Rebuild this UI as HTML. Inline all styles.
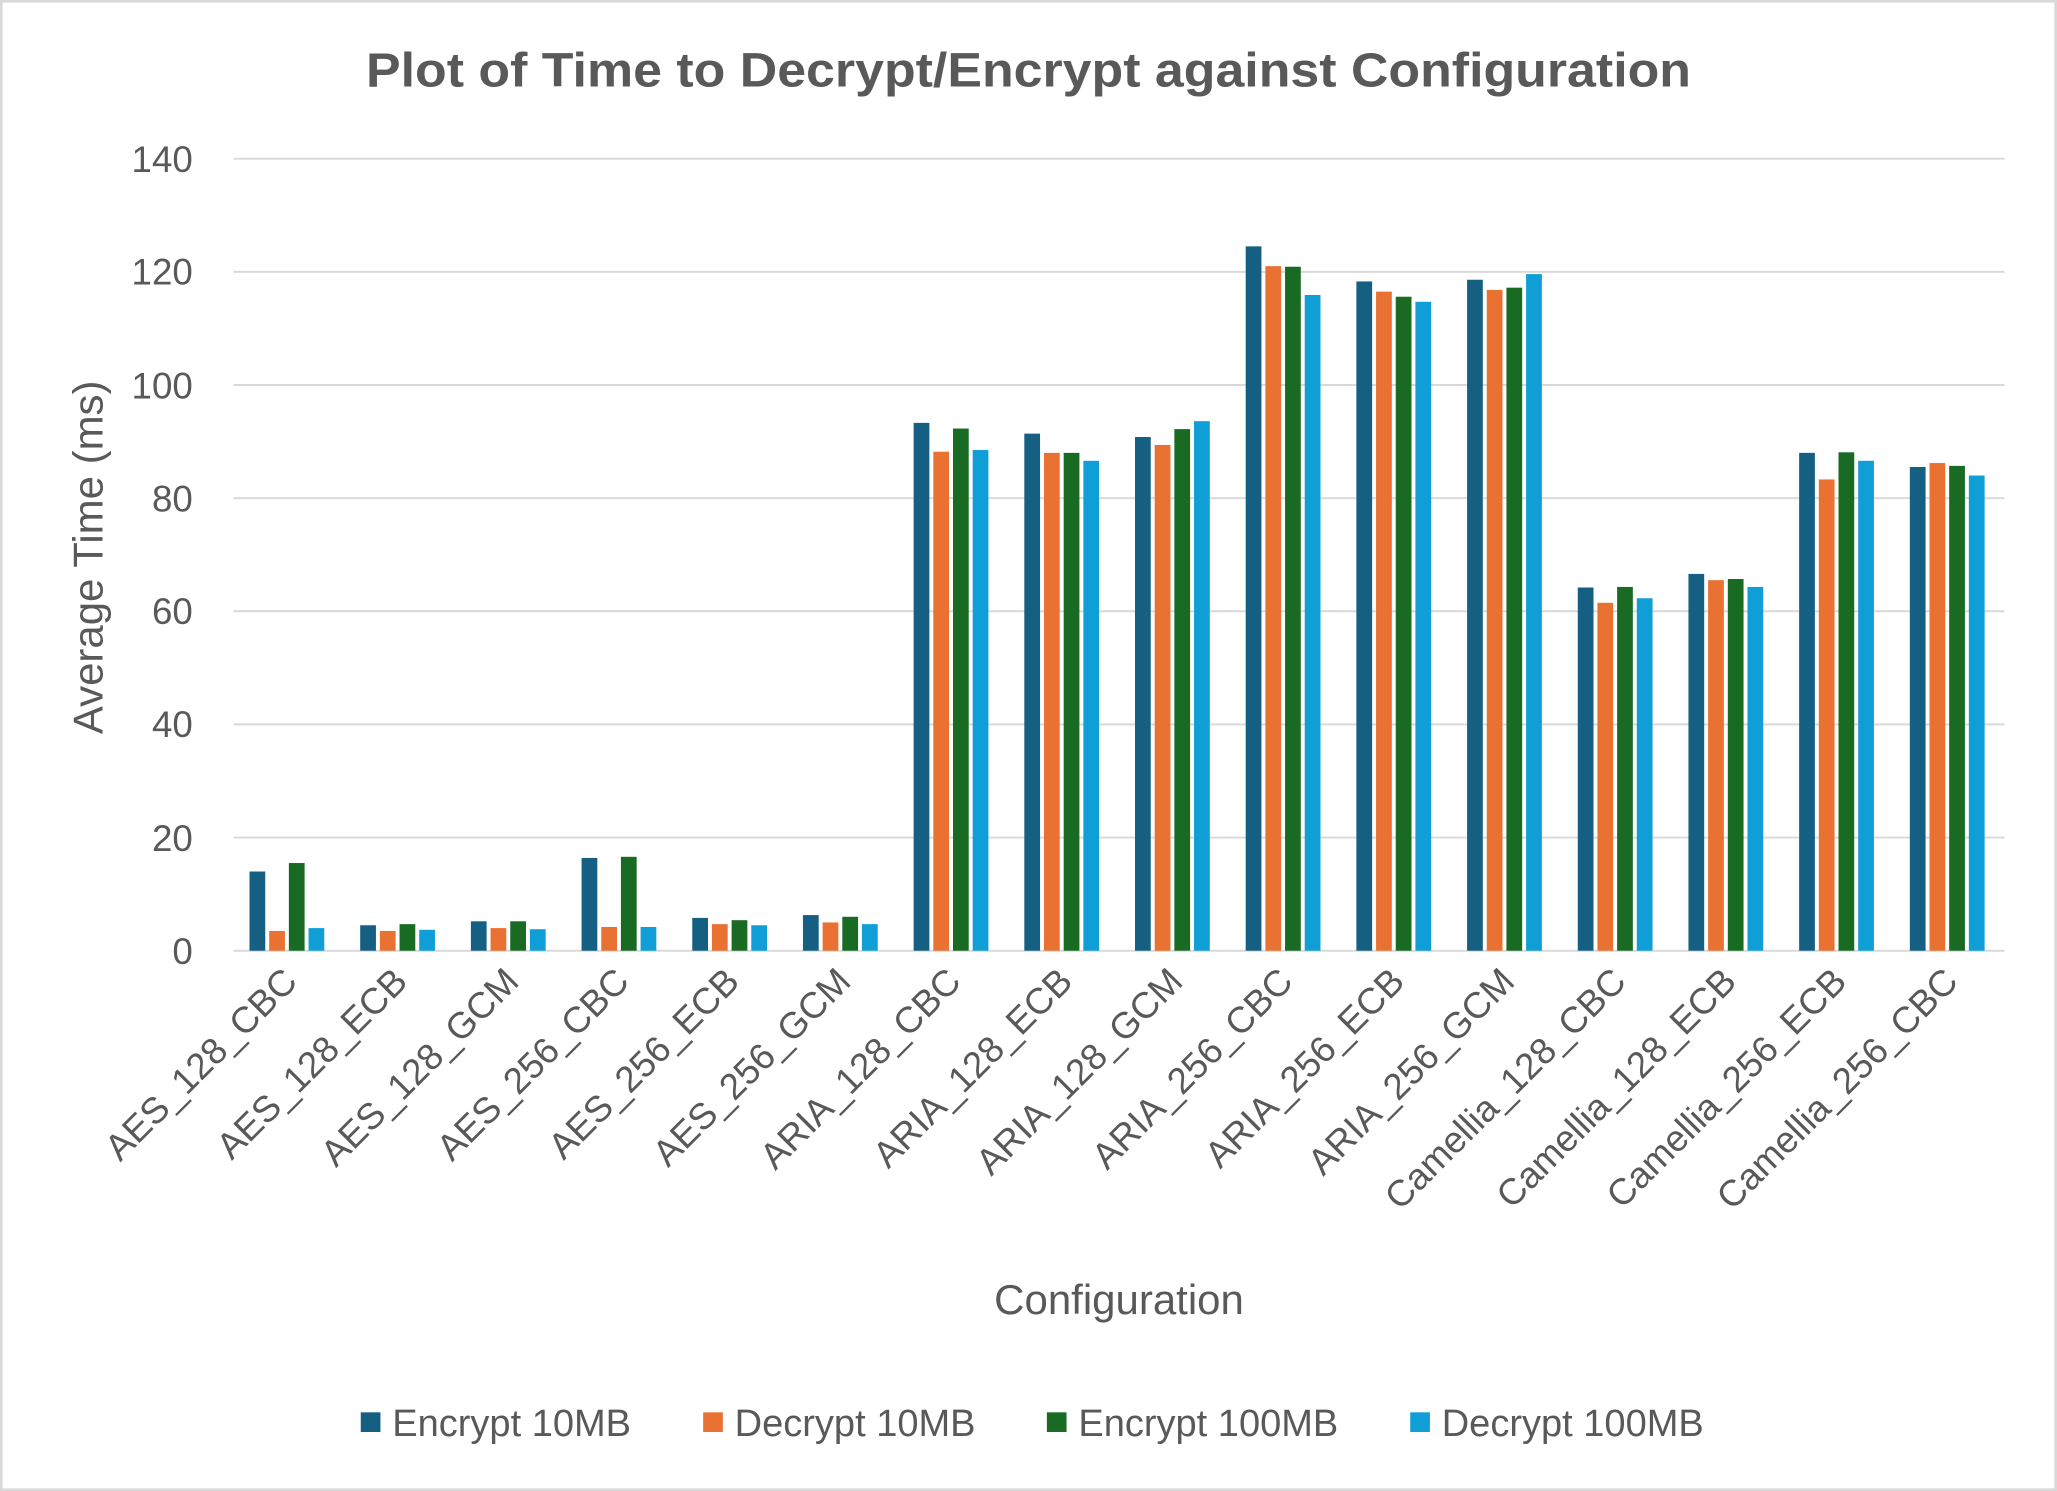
<!DOCTYPE html>
<html><head><meta charset="utf-8"><style>
html,body{margin:0;padding:0;background:#fff;}
svg{display:block;}
text{font-family:"Liberation Sans",sans-serif;fill:#595959;}
</style></head><body>
<svg id="c" width="2057" height="1491" viewBox="0 0 1568 1137" preserveAspectRatio="none" xmlns="http://www.w3.org/2000/svg">
<rect x="1" y="1" width="1566" height="1135" fill="#fff" stroke="#d9d9d9" stroke-width="2"/>
<text x="279" y="66" font-size="37" font-weight="bold" textLength="1010" lengthAdjust="spacingAndGlyphs">Plot of Time to Decrypt/Encrypt against Configuration</text>
<g id="grid" stroke="#d9d9d9" stroke-width="1.5">
<line x1="178" x2="1528" y1="121" y2="121"/><line x1="178" x2="1528" y1="207.3" y2="207.3"/>
<line x1="178" x2="1528" y1="293.6" y2="293.6"/><line x1="178" x2="1528" y1="379.9" y2="379.9"/>
<line x1="178" x2="1528" y1="466.1" y2="466.1"/><line x1="178" x2="1528" y1="552.4" y2="552.4"/>
<line x1="178" x2="1528" y1="638.7" y2="638.7"/><line x1="178" x2="1528" y1="725" y2="725"/>
</g>
<g font-size="28" text-anchor="end">
<text x="147" y="131">140</text><text x="147" y="217">120</text><text x="147" y="304">100</text>
<text x="147" y="390">80</text><text x="147" y="476">60</text><text x="147" y="562">40</text>
<text x="147" y="649">20</text><text x="147" y="735">0</text>
</g>
<text transform="translate(78,425) rotate(-90)" text-anchor="middle" font-size="32">Average Time (ms)</text>
<text x="853" y="1002" text-anchor="middle" font-size="32">Configuration</text>
<g id="bars"></g>
<g font-size="28" text-anchor="end">
<text transform="translate(228,750) rotate(-45)">AES_128_CBC</text>
<text transform="translate(312,750) rotate(-45)">AES_128_ECB</text>
<text transform="translate(397,750) rotate(-45)">AES_128_GCM</text>
<text transform="translate(481,750) rotate(-45)">AES_256_CBC</text>
<text transform="translate(565,750) rotate(-45)">AES_256_ECB</text>
<text transform="translate(650,750) rotate(-45)">AES_256_GCM</text>
<text transform="translate(734,750) rotate(-45)">ARIA_128_CBC</text>
<text transform="translate(819,750) rotate(-45)">ARIA_128_ECB</text>
<text transform="translate(903,750) rotate(-45)">ARIA_128_GCM</text>
<text transform="translate(987,750) rotate(-45)">ARIA_256_CBC</text>
<text transform="translate(1072,750) rotate(-45)">ARIA_256_ECB</text>
<text transform="translate(1156,750) rotate(-45)">ARIA_256_GCM</text>
<text transform="translate(1241,750) rotate(-45)">Camellia_128_CBC</text>
<text transform="translate(1325,750) rotate(-45)">Camellia_128_ECB</text>
<text transform="translate(1409,750) rotate(-45)">Camellia_256_ECB</text>
<text transform="translate(1494,750) rotate(-45)">Camellia_256_CBC</text>
</g>
<g font-size="29">
<rect x="275" y="1077" width="15" height="15" fill="#156082"/><text x="299" y="1095">Encrypt 10MB</text>
<rect x="536" y="1077" width="15" height="15" fill="#E97132"/><text x="560" y="1095">Decrypt 10MB</text>
<rect x="798" y="1077" width="15" height="15" fill="#196B24"/><text x="822" y="1095">Encrypt 100MB</text>
<rect x="1075" y="1077" width="15" height="15" fill="#0F9ED5"/><text x="1099" y="1095">Decrypt 100MB</text>
</g>
</svg>
<script>
var d=[[14,3.5,15.5,4],[4.5,3.5,4.7,3.7],[5.2,4,5.2,3.8],[16.4,4.2,16.6,4.2],[5.8,4.7,5.4,4.5],[6.3,5,6,4.7],
[93.3,88.2,92.3,88.5],[91.4,88,88,86.6],[90.8,89.4,92.2,93.6],[124.5,121,120.9,115.9],[118.3,116.5,115.6,114.7],
[118.6,116.8,117.2,119.6],[64.2,61.5,64.3,62.3],[66.6,65.5,65.7,64.3],[88,83.3,88.1,86.6],[85.5,86.2,85.7,84]];
var col=["#156082","#E97132","#196B24","#0F9ED5"],s="",k=604/140;
for(var i=0;i<16;i++){var c=178+84.375*(i+0.5);for(var j=0;j<4;j++){var h=d[i][j]*k;
s+='<rect x="'+(c-30+j*15)+'" y="'+(725-h)+'" width="12" height="'+h+'" fill="'+col[j]+'"/>';}}
document.getElementById("bars").innerHTML=s;
</script>
</body></html>
